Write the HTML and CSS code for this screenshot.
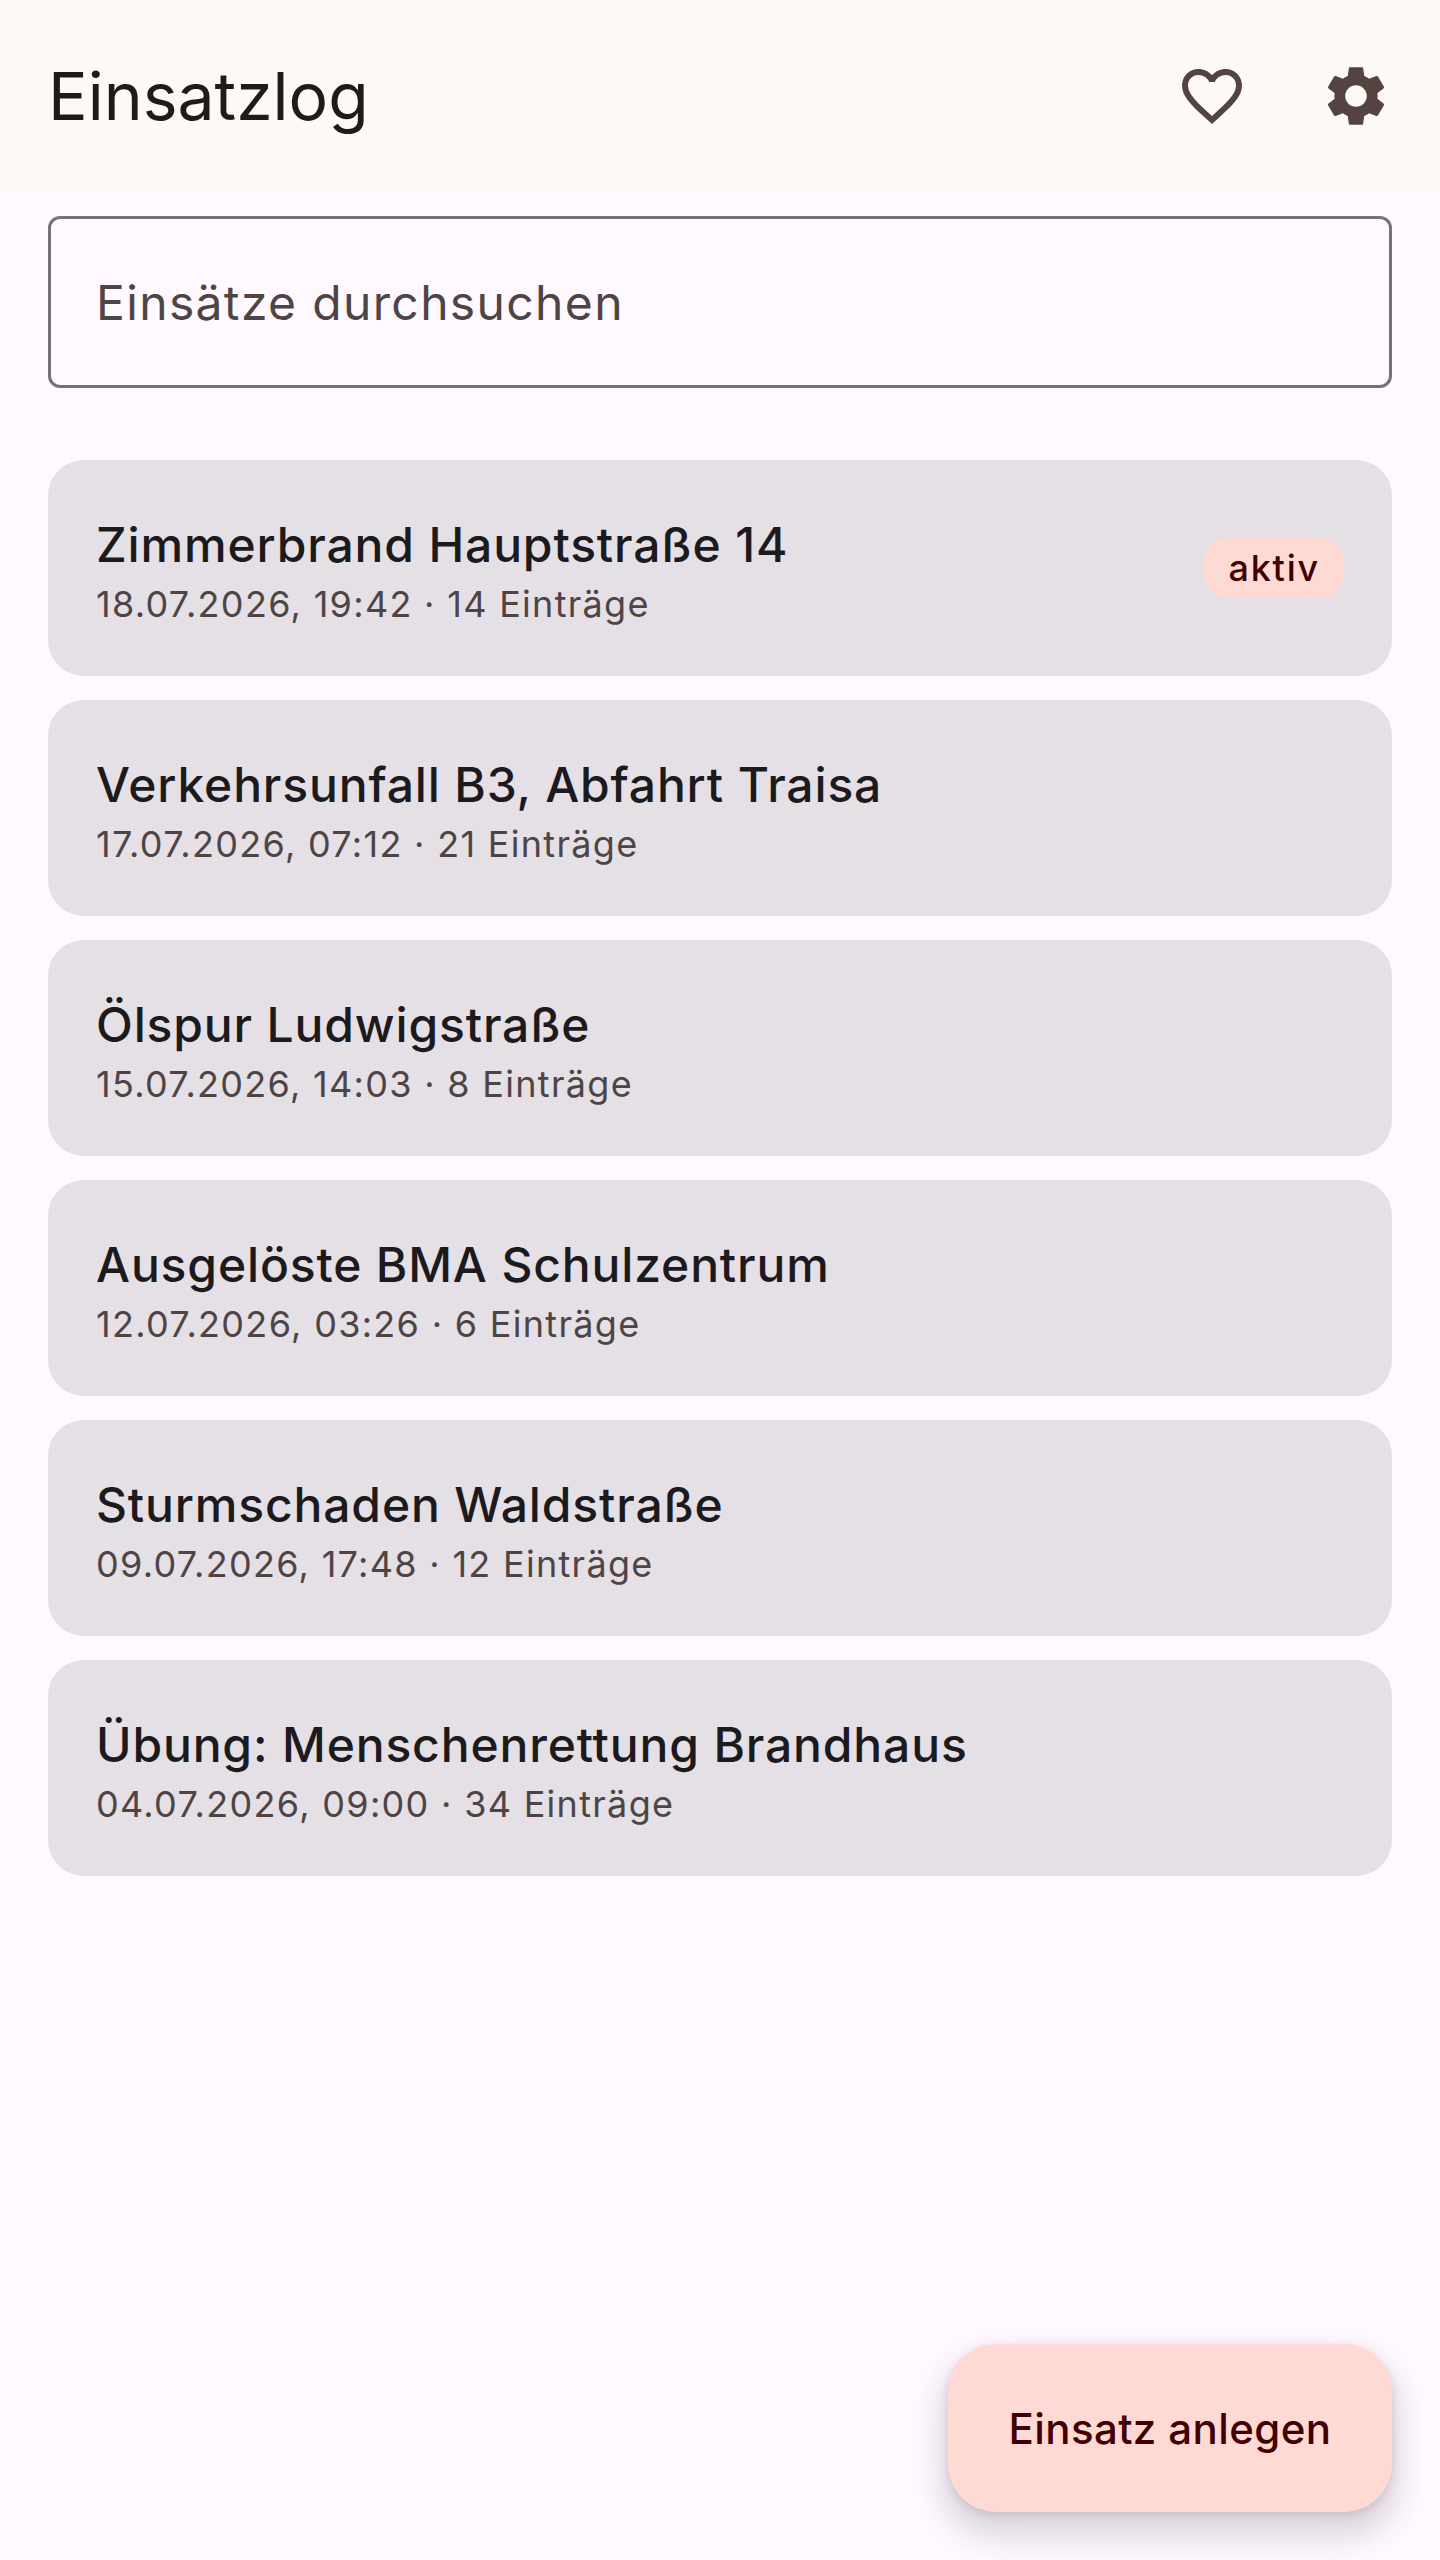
FILE: index.html
```html
<!DOCTYPE html>
<html lang="de">
<head>
<meta charset="utf-8">
<title>Einsatzlog</title>
<link rel="stylesheet" href="styles.css">
</head>
<body>
<div class="screen">
  <header class="appbar">
    <h1 class="appbar-title">Einsatzlog</h1>
    <div class="appbar-actions">
      <button class="icon-button" aria-label="Favoriten">
        <svg class="icon" viewBox="0 0 24 24"><path d="M16.5 3c-1.74 0-3.41.81-4.5 2.09C10.91 3.81 9.24 3 7.5 3 4.42 3 2 5.42 2 8.5c0 3.78 3.4 6.86 8.55 11.54L12 21.35l1.45-1.32C18.6 15.36 22 12.28 22 8.5 22 5.42 19.58 3 16.5 3zm-4.4 15.55l-.1.1-.1-.1C7.14 14.24 4 11.39 4 8.5 4 6.5 5.5 5 7.5 5c1.54 0 3.04.99 3.57 2.36h1.87C13.46 5.99 14.96 5 16.5 5c2 0 3.5 1.5 3.5 3.5 0 2.89-3.14 5.74-7.9 10.05z"/></svg>
      </button>
      <button class="icon-button" aria-label="Einstellungen">
        <svg class="icon" viewBox="0 0 24 24"><path d="M19.14 12.94c.04-.3.06-.61.06-.94 0-.32-.02-.64-.07-.94l2.03-1.58c.18-.14.23-.41.12-.61l-1.92-3.32c-.12-.22-.37-.29-.59-.22l-2.39.96c-.5-.38-1.03-.7-1.62-.94l-.36-2.54c-.04-.24-.24-.41-.48-.41h-3.84c-.24 0-.43.17-.47.41l-.36 2.54c-.59.24-1.13.57-1.62.94l-2.39-.96c-.22-.08-.47 0-.59.22L2.74 8.87c-.12.21-.08.47.12.61l2.03 1.58c-.05.3-.09.63-.09.94s.02.64.07.94l-2.03 1.58c-.18.14-.23.41-.12.61l1.92 3.32c.12.22.37.29.59.22l2.39-.96c.5.38 1.03.7 1.62.94l.36 2.54c.05.24.24.41.48.41h3.84c.24 0 .44-.17.47-.41l.36-2.54c.59-.24 1.13-.56 1.62-.94l2.39.96c.22.08.47 0 .59-.22l1.92-3.32c.12-.22.07-.47-.12-.61l-2.01-1.58zM12 15.6c-1.98 0-3.6-1.62-3.6-3.6s1.62-3.6 3.6-3.6 3.6 1.62 3.6 3.6-1.62 3.6-3.6 3.6z"/></svg>
      </button>
    </div>
  </header>
  <main class="content">
    <div class="search">Einsätze durchsuchen</div>
    <ul class="list">
      <li class="card">
        <div class="card-text">
          <div class="card-title">Zimmerbrand Hauptstraße 14</div>
          <div class="card-meta">18.07.2026, 19:42 · 14 Einträge</div>
        </div>
        <span class="badge">aktiv</span>
      </li>
      <li class="card">
        <div class="card-text">
          <div class="card-title">Verkehrsunfall B3, Abfahrt Traisa</div>
          <div class="card-meta">17.07.2026, 07:12 · 21 Einträge</div>
        </div>
      </li>
      <li class="card">
        <div class="card-text">
          <div class="card-title">Ölspur Ludwigstraße</div>
          <div class="card-meta">15.07.2026, 14:03 · 8 Einträge</div>
        </div>
      </li>
      <li class="card">
        <div class="card-text">
          <div class="card-title">Ausgelöste BMA Schulzentrum</div>
          <div class="card-meta">12.07.2026, 03:26 · 6 Einträge</div>
        </div>
      </li>
      <li class="card">
        <div class="card-text">
          <div class="card-title">Sturmschaden Waldstraße</div>
          <div class="card-meta">09.07.2026, 17:48 · 12 Einträge</div>
        </div>
      </li>
      <li class="card">
        <div class="card-text">
          <div class="card-title">Übung: Menschenrettung Brandhaus</div>
          <div class="card-meta">04.07.2026, 09:00 · 34 Einträge</div>
        </div>
      </li>
    </ul>
  </main>
  <button class="fab">Einsatz anlegen</button>
</div>
</body>
</html>
```

FILE: styles.css
```css
* { box-sizing: border-box; }
html, body { margin: 0; padding: 0; }
body {
  font-family: Inter, "Liberation Sans", sans-serif;
  background: #fff8fe;
  color: #1e1b1d;
}
.screen {
  position: relative;
  width: 1440px;
  height: 2560px;
  overflow: hidden;
}
.appbar {
  height: 192px;
  background: #fcf9f7;
  display: flex;
  align-items: center;
  justify-content: space-between;
  padding: 0 12px 0 48px;
}
.appbar-title {
  margin: 0;
  font-size: 66px;
  font-weight: 400;
  line-height: 84px;
  color: #1e1b1a;
}
.appbar-actions { display: flex; }
.icon-button {
  width: 144px;
  height: 144px;
  padding: 0;
  border: 0;
  background: none;
  display: flex;
  align-items: center;
  justify-content: center;
}
.icon { width: 72px; height: 72px; fill: #534341; }
.content { padding: 24px 48px 0; }
.search {
  height: 172px;
  border: 3px solid #7a7177;
  border-radius: 12px;
  display: flex;
  align-items: center;
  padding: 0 45px;
  font-size: 48px;
  letter-spacing: 1.35px;
  color: #4f4445;
}
.list {
  list-style: none;
  margin: 72px 0 0;
  padding: 0;
  display: flex;
  flex-direction: column;
  gap: 24px;
}
.card {
  height: 216px;
  border-radius: 36px;
  background: #e5e0e6;
  display: flex;
  align-items: center;
  justify-content: space-between;
  padding: 0 48px;
}
.card-text { padding-top: 8px; }
.card-title {
  font-size: 48px;
  font-weight: 500;
  line-height: 64px;
  letter-spacing: 0.85px;
  color: #1c1a1d;
}
.card-meta {
  font-size: 36px;
  line-height: 54px;
  letter-spacing: 1.3px;
  color: #4f4445;
}
.badge {
  height: 60px;
  padding: 0 24px;
  border-radius: 24px;
  background: #ffd9d3;
  color: #410002;
  display: flex;
  align-items: center;
  font-size: 36px;
  font-weight: 500;
  letter-spacing: 1.8px;
}
.fab {
  position: absolute;
  right: 48px;
  bottom: 48px;
  width: 444px;
  height: 168px;
  border: 0;
  border-radius: 48px;
  background: #ffd9d3;
  color: #410002;
  font-family: inherit;
  font-size: 42px;
  font-weight: 500;
  letter-spacing: 0.4px;
  box-shadow: 0 18px 30px 6px rgba(60, 50, 70, 0.18), 0 3px 9px rgba(60, 50, 70, 0.14);
}
```
